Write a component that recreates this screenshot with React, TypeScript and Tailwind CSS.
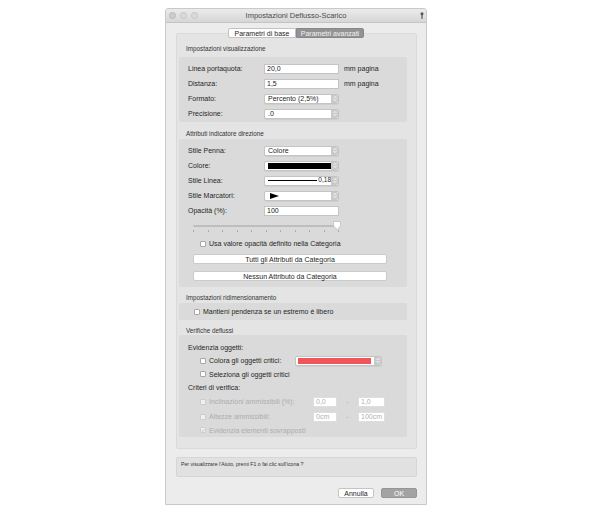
import React from 'react';

const FONT = "font-['Liberation_Sans',Arial,sans-serif]";

function Stepper() {
  return (
    <div className="w-[7px] self-stretch bg-[#c9c9c9] rounded-r-[2px] flex flex-col items-center justify-center gap-[1px]">
      <svg width="4" height="2" viewBox="0 0 4 2"><path d="M0.5 2L2 0.5L3.5 2" stroke="#fff" strokeWidth="0.9" fill="none" /></svg>
      <svg width="4" height="2" viewBox="0 0 4 2"><path d="M0.5 0L2 1.5L3.5 0" stroke="#fff" strokeWidth="0.9" fill="none" /></svg>
    </div>
  );
}

function Popup({ children, className = 'w-[75px]' }: { children: React.ReactNode; className?: string }) {
  return (
    <div className={`${className} h-[10px] flex bg-white border border-[#c4c4c4] rounded-[2px] shadow-[0_0.5px_0.5px_rgba(0,0,0,0.1)]`}>
      <div className="flex-1 flex items-center pl-[3px] overflow-hidden">{children}</div>
      <Stepper />
    </div>
  );
}

function Input({ value, className = 'w-[75px]', disabled = false }: { value: string; className?: string; disabled?: boolean }) {
  return (
    <div
      className={`${className} h-[10px] flex items-center pl-[2px] bg-white border ${disabled ? 'border-[#dedede] text-[#b0b0b0]' : 'border-[#c4c4c4] text-[#222]'}`}
    >
      {value}
    </div>
  );
}

function Check({ checked = false, disabled = false }: { checked?: boolean; disabled?: boolean }) {
  return (
    <div
      className={`w-[6px] h-[6px] rounded-[1px] border flex items-center justify-center ${disabled ? 'border-[#cdcdcd] bg-[#f0f0f0]' : 'border-[#a8a8a8] bg-white'}`}
    >
      {checked && (
        <svg width="5" height="5" viewBox="0 0 5 5">
          <path d="M1 2.6L2 3.8L4.2 0.8" stroke={disabled ? '#aaa' : '#333'} strokeWidth="0.8" fill="none" />
        </svg>
      )}
    </div>
  );
}

function Row({ label, children, h = 'h-[15px]' }: { label: string; children?: React.ReactNode; h?: string }) {
  return (
    <div className={`${h} flex items-center pl-[9px]`}>
      <div className="w-[76px]">{label}</div>
      {children}
    </div>
  );
}

function CheckRow({ label, checked, disabled, h, pl = 'pl-[21px]' }: { label: string; checked?: boolean; disabled?: boolean; h: string; pl?: string }) {
  return (
    <div className={`${h} flex items-center ${pl} gap-[3px] ${disabled ? 'text-[#adadad]' : ''}`}>
      <Check checked={checked} disabled={disabled} />
      <span>{label}</span>
    </div>
  );
}

function SectionTitle({ children, className }: { children: React.ReactNode; className: string }) {
  return <div className={`${className} flex items-center pl-[9px] text-[6.3px] text-[#333]`}>{children}</div>;
}

export default function App() {
  const ticks = Array.from({ length: 11 });
  return (
    <div className={`${FONT} w-[607px] h-[513px] bg-white pt-[8px] pl-[165px] text-[7px] text-[#262626] leading-none`}>
      <div className="w-[262px] h-[497px] bg-[#ececec] border border-[#c9c9c9] rounded-t-[3px] flex flex-col">
        {/* title bar */}
        <div className="h-[14px] relative flex items-center justify-center bg-gradient-to-b from-[#ebebeb] to-[#d6d6d6] border-b border-[#c4c4c4] rounded-t-[3px]">
          <div className="absolute left-[3px] top-[3px] flex gap-[4px]">
            <div className="w-[7px] h-[7px] rounded-full bg-[#cdcdcd] border border-[#b9b9b9]" />
            <div className="w-[7px] h-[7px] rounded-full bg-[#dadada] border border-[#c6c6c6]" />
            <div className="w-[7px] h-[7px] rounded-full bg-[#dadada] border border-[#c6c6c6]" />
          </div>
          <span className="text-[7.5px] text-[#4a4a4a]">Impostazioni Deflusso-Scarico</span>
          <svg className="absolute right-[2px] top-[3px]" width="4" height="7" viewBox="0 0 4 7">
            <circle cx="2" cy="1.8" r="1.5" fill="#555" />
            <rect x="1.4" y="2.8" width="1.2" height="4" fill="#555" />
          </svg>
        </div>

        {/* tabs */}
        <div className="mt-[5px] h-[10px] flex justify-center relative z-10">
          <div className="w-[68px] h-[10px] flex items-center justify-center bg-white border border-[#c2c2c2] rounded-l-[2px] text-[7px]">
            Parametri di base
          </div>
          <div className="w-[68px] h-[10px] flex items-center justify-center bg-[#939393] border border-[#888] rounded-r-[2px] text-[7px] text-[#f4f4f4]">
            Parametri avanzati
          </div>
        </div>

        {/* panel */}
        <div className="-mt-[5px] ml-[10px] w-[241px] h-[416px] bg-[#e4e4e4] border border-[#dadada] rounded-[2px]">
          <SectionTitle className="mt-[10px] h-[10px]">Impostazioni visualizzazione</SectionTitle>
          <div className="mt-[3px] ml-[2px] w-[228px] h-[65px] bg-[#dadada] rounded-[2px] pt-[4px]">
            <Row label="Linea portaquota:">
              <Input value="20,0" />
              <span className="ml-[5px]">mm pagina</span>
            </Row>
            <Row label="Distanza:">
              <Input value="1,5" />
              <span className="ml-[5px]">mm pagina</span>
            </Row>
            <Row label="Formato:">
              <Popup>Percento (2,5%)</Popup>
            </Row>
            <Row label="Precisione:">
              <Popup>.0</Popup>
            </Row>
          </div>

          <SectionTitle className="mt-[7px] h-[10px]">Attributi indicatore direzione</SectionTitle>
          <div className="ml-[2px] w-[228px] h-[148px] bg-[#dadada] rounded-[2px] pt-[4px]">
            <Row label="Stile Penna:">
              <Popup>Colore</Popup>
            </Row>
            <Row label="Colore:">
              <Popup>
                <div className="w-[64px] h-[6px] bg-black" />
              </Popup>
            </Row>
            <Row label="Stile Linea:">
              <Popup>
                <div className="flex items-center w-full">
                  <div className="w-[50px] h-[0.5px] bg-black" />
                  <span className="ml-[1px] text-[6.5px]">0,18</span>
                </div>
              </Popup>
            </Row>
            <Row label="Stile Marcatori:">
              <Popup>
                <svg className="ml-[2px]" width="9" height="6" viewBox="0 0 9 6">
                  <path d="M0 0L9 3L0 6Z" fill="#000" />
                </svg>
              </Popup>
            </Row>
            <Row label="Opacità (%):">
              <Input value="100" />
            </Row>
            {/* slider */}
            <div className="h-[18px] pl-[14px] pt-[6px]">
              <div className="relative w-[148px] h-[10px]">
                <div className="absolute left-0 top-[1px] w-[145px] h-[2px] rounded-full bg-[#bdbdbd]" />
                <div className="absolute left-0 top-[6px] w-[146px] flex justify-between">
                  {ticks.map((_, i) => (
                    <div key={i} className="w-[0.5px] h-[2px] bg-[#a9a9a9]" />
                  ))}
                </div>
                <svg className="absolute left-[140px] -top-[3px]" width="8" height="9" viewBox="0 0 8 9">
                  <path d="M1 0.5H7Q7.5 0.5 7.5 1V5L4 8.5L0.5 5V1Q0.5 0.5 1 0.5Z" fill="#fff" stroke="#b0b0b0" strokeWidth="0.6" />
                </svg>
              </div>
            </div>
            <CheckRow h="h-[15px]" label="Usa valore opacità definito nella Categoria" />
            <div className="mt-[3px] ml-[14px] w-[194px] h-[10px] flex items-center justify-center bg-white border border-[#cacaca] rounded-[2px]">
              Tutti gli Attributi da Categoria
            </div>
            <div className="mt-[7px] ml-[14px] w-[194px] h-[10px] flex items-center justify-center bg-white border border-[#cacaca] rounded-[2px]">
              Nessun Attributo da Categoria
            </div>
          </div>

          <SectionTitle className="mt-[6px] h-[10px]">Impostazioni ridimensionamento</SectionTitle>
          <div className="ml-[2px] w-[228px] h-[17px] bg-[#dadada] rounded-[2px] flex items-center">
            <CheckRow h="h-[17px]" pl="pl-[15px]" label="Mantieni pendenza se un estremo è libero" />
          </div>

          <SectionTitle className="mt-[6px] h-[10px]">Verifiche deflussi</SectionTitle>
          <div className="-mt-[1px] ml-[2px] w-[228px] h-[102px] bg-[#dadada] rounded-[2px] pt-[5px]">
            <Row h="h-[14px]" label="Evidenzia oggetti:" />
            <div className="h-[13px] flex items-center pl-[21px]">
              <div className="w-[95px] flex items-center gap-[3px]">
                <Check />
                <span>Colora gli oggetti critici:</span>
              </div>
              <Popup className="w-[87px]">
                <div className="w-[73px] h-[6px] bg-[#f0555b] -ml-[1px]" />
              </Popup>
            </div>
            <CheckRow h="h-[14px]" label="Seleziona gli oggetti critici" />
            <Row h="h-[13px]" label="Criteri di verifica:" />
            <div className="h-[15px] flex items-center pl-[21px] text-[#adadad]">
              <div className="w-[113px] flex items-center gap-[3px]">
                <Check disabled />
                <span>Inclinazioni ammissibili (%):</span>
              </div>
              <Input disabled value="0,0" className="w-[24px]" />
              <span className="w-[21px] text-center">-</span>
              <Input disabled value="1,0" className="w-[27px]" />
            </div>
            <div className="h-[15px] flex items-center pl-[21px] text-[#adadad]">
              <div className="w-[113px] flex items-center gap-[3px]">
                <Check disabled />
                <span>Altezze ammissibili:</span>
              </div>
              <Input disabled value="0cm" className="w-[24px]" />
              <span className="w-[21px] text-center">-</span>
              <Input disabled value="100cm" className="w-[27px]" />
            </div>
            <CheckRow h="h-[12px]" disabled checked label="Evidenzia elementi sovrapposti" />
          </div>
        </div>

        {/* help */}
        <div className="mt-[8px] ml-[10px] w-[241px] h-[20px] bg-[#e1e1e1] border border-[#d6d6d6] rounded-[2px] pl-[4px] pt-[4px] text-[5.2px] text-[#333]">
          Per visualizzare l'Aiuto, premi F1 o fai clic sull'icona ?
        </div>

        {/* buttons */}
        <div className="mt-[11px] h-[10px] flex justify-end gap-[7px] pr-[9px]">
          <div className="w-[36px] h-[10px] flex items-center justify-center bg-white border border-[#c4c4c4] rounded-[2px]">
            Annulla
          </div>
          <div className="w-[36px] h-[10px] flex items-center justify-center bg-[#a3a3a3] border border-[#969696] rounded-[2px] text-white">
            OK
          </div>
        </div>
      </div>
    </div>
  );
}
